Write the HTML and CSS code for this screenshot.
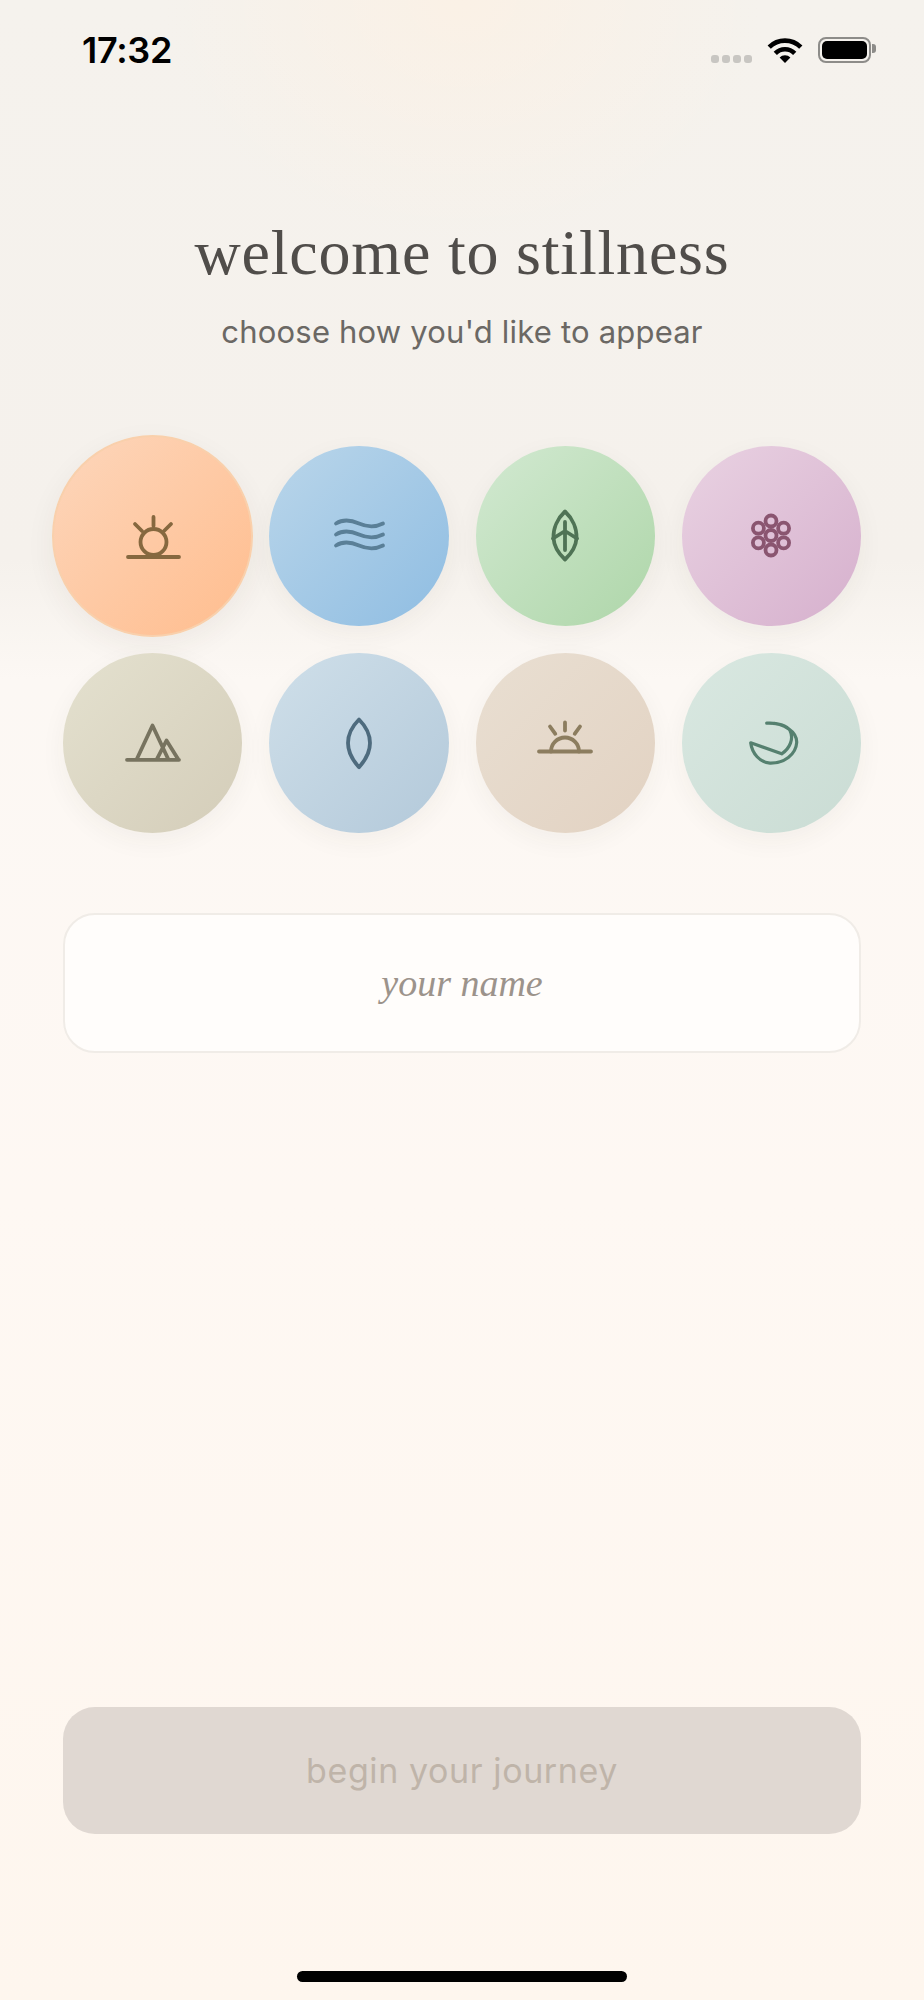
FILE: index.html
```html
<!DOCTYPE html>
<html lang="en">
<head>
  <meta charset="UTF-8">
  <meta name="viewport" content="width=device-width, initial-scale=1.0">
  <title>stillness - Welcome</title>
  <link rel="stylesheet" href="styles.css">
</head>
<body>
  <div class="status-bar">
    <span class="time">17:32</span>
    <div class="status-icons">
      <div class="signal"><i></i><i></i><i></i><i></i></div>
      <svg class="wifi" width="36" height="26" viewBox="0 0 36 26">
        <path d="M2.2 10.2A22.3 22.3 0 0 1 33.8 10.2" fill="none" stroke="#000" stroke-width="4.6"/>
        <path d="M8.3 16.3A13.7 13.7 0 0 1 27.7 16.3" fill="none" stroke="#000" stroke-width="4.6"/>
        <path d="M18 26L12.6 20.6A7.6 7.6 0 0 1 23.4 20.6Z"/>
      </svg>
      <div class="battery"><div class="battery-fill"></div></div>
    </div>
  </div>

  <div class="intro">
    <h1>welcome to stillness</h1>
    <p>choose how you'd like to appear</p>
  </div>

  <div class="avatar-grid">
    <button class="avatar peach selected">
      <svg viewBox="0 0 60 60" stroke="#86683f">
        <path d="M5 51H56M30.5 11V20M12 18L19 25M48 18L41 25"/>
        <circle cx="30.5" cy="36" r="13"/>
      </svg>
    </button>
    <button class="avatar blue">
      <svg viewBox="0 0 60 60" stroke="#5a7f97">
        <path d="M7 17.5C14 13 22 14 30 17.5S46 21.5 54 17.5"/>
        <path d="M7 28.5C14 24 22 25 30 28.5S46 32.5 54 28.5"/>
        <path d="M7 39.5C14 35 22 36 30 39.5S46 43.5 54 39.5"/>
      </svg>
    </button>
    <button class="avatar green">
      <svg viewBox="0 0 60 60" stroke="#4f7355">
        <path d="M30 5.5C37 12 42 22 41.5 32C41 41 36 48 30 53.5C24 48 19 41 18.5 32C18 22 23 12 30 5.5Z"/>
        <path d="M30 16V44M30 25L18 32.5M30 25L42 32.5"/>
      </svg>
    </button>
    <button class="avatar pink">
      <svg viewBox="0 0 60 60" stroke="#8a5570">
        <circle cx="30" cy="29.5" r="5.5"/>
        <circle cx="30" cy="15" r="5.5"/>
        <circle cx="30" cy="44" r="5.5"/>
        <circle cx="17.4" cy="22.2" r="5.5"/>
        <circle cx="42.6" cy="22.2" r="5.5"/>
        <circle cx="17.4" cy="36.8" r="5.5"/>
        <circle cx="42.6" cy="36.8" r="5.5"/>
      </svg>
    </button>
    <button class="avatar sand">
      <svg viewBox="0 0 60 60" stroke="#77735f">
        <path d="M4 46.8H56M13.5 46.8L29.5 12.5L45.5 46.8M33.5 46.8L43.5 27.5L55.5 46.8"/>
      </svg>
    </button>
    <button class="avatar steel">
      <svg viewBox="0 0 60 60" stroke="#4e6b7e">
        <path d="M30 6.5C36.5 13 41 22 41 30C41 39 36.5 47 30 54.2C23.500 47 19 39 19 30C19 22 23.500 13 30 6.5Z"/>
      </svg>
    </button>
    <button class="avatar tan">
      <svg viewBox="0 0 60 60" stroke="#8c7d5f">
        <path d="M4 38.500H56M30 9.500V17.500M15 13.500L20.300 20.800M45 13.500L39.700 20.800"/>
        <path d="M16 38.500A14 14 0 0 1 44 38.500"/>
      </svg>
    </button>
    <button class="avatar mint">
      <svg class="thin" viewBox="0 0 60 60" stroke="#55806f">
        <path d="M25.700 10.200C44 9.500 56 19.500 55.700 29.500C55 41.500 43 50.500 29 50.200C19 49.500 11 40.500 9.700 29.800L40.700 40.800C49 35.500 53 25.500 49 17.500C46 12.500 37 9.500 25.700 10.200Z"/>
      </svg>
    </button>
  </div>

  <input class="name-input" type="text" placeholder="your name">

  <button class="begin-button" disabled>begin your journey</button>

  <div class="home-bar"></div>
</body>
</html>
```

FILE: styles.css
```css
* {
  box-sizing: border-box;
}

html {
  height: 100%;
}

body {
  margin: 0;
  min-height: 2000px;
  padding: 0 63px;
  display: flex;
  flex-direction: column;
  font-family: Inter, "Noto Sans", sans-serif;
  background-color: #fef6ee;
  background-image:
    radial-gradient(ellipse 300px 240px at 50% 0, rgba(255, 240, 224, 0.55), rgba(255, 240, 224, 0)),
    linear-gradient(180deg, #f5f2ed 0, #f5f1ec 28%, #fcf8f4 34%, #fef8f3 60%, #fef6ee 100%);
}

.status-bar {
  display: flex;
  justify-content: space-between;
  align-items: flex-start;
  margin: 0 -16px 0 19px;
  padding-top: 37px;
  height: 63px;
}

.time {
  font-size: 36px;
  font-weight: 600;
  line-height: 26px;
  letter-spacing: -0.3px;
  color: #000;
}

.status-icons {
  display: flex;
  align-items: flex-end;
}

.signal {
  display: flex;
  gap: 3px;
  margin-right: 15px;
}

.signal i {
  width: 8px;
  height: 8px;
  border-radius: 3px;
  background-color: #c8c6c2;
}

.wifi {
  display: block;
  margin-right: 15px;
}

.battery {
  position: relative;
  width: 53px;
  height: 26px;
  padding: 2px;
  border: 2px solid #8d8c89;
  border-radius: 8px;
  margin-right: 6px;
}

/* the little nub on the right end */
.battery::after {
  content: "";
  position: absolute;
  left: 52px;
  top: 5px;
  width: 4px;
  height: 9px;
  border-radius: 0 3px 3px 0;
  background-color: #8d8c89;
}

.battery-fill {
  height: 100%;
  border-radius: 5px;
  background-color: #000;
}

.intro {
  text-align: center;
  margin-top: 155px;
}

.intro h1 {
  margin: 0;
  font-family: "Liberation Serif", serif;
  font-size: 64px;
  font-weight: 400;
  line-height: 70px;
  letter-spacing: 0.8px;
  color: #504d4a;
}

.intro p {
  margin: 24px 0 0;
  font-size: 31px;
  font-weight: 400;
  line-height: 40px;
  letter-spacing: 0.2px;
  color: #6b6864;
}

.avatar-grid {
  display: grid;
  grid-template-columns: repeat(4, 1fr);
  grid-auto-rows: 180px;
  gap: 27px;
  margin-top: 94px;
}

.avatar {
  display: flex;
  align-items: center;
  justify-content: center;
  padding: 0;
  border: none;
  border-radius: 50%;
  box-shadow: 0 8px 26px rgba(60, 50, 40, 0.05);
}

.avatar svg {
  width: 60px;
  height: 60px;
  flex: none;
  fill: none;
  stroke-width: 3.8;
  stroke-linecap: round;
  stroke-linejoin: round;
}

.avatar svg.thin {
  stroke-width: 3.2;
}

.avatar.selected {
  margin: -11px;
  border: 2px solid #f9d0ac;
  box-shadow: 0 10px 30px rgba(60, 50, 40, 0.06);
}

.peach { background: linear-gradient(135deg, #fdd6bb, #ffbd8e); }
.blue { background: linear-gradient(135deg, #bad6ea, #8fbde2); }
.green { background: linear-gradient(135deg, #d2e9d1, #aed6a9); }
.pink { background: linear-gradient(135deg, #e9d2e2, #d6b0cd); }
.sand { background: linear-gradient(135deg, #e4e1cf, #d4cdb9); }
.steel { background: linear-gradient(135deg, #cfdfe9, #b3c9da); }
.tan { background: linear-gradient(135deg, #e9dfd2, #e2d2c2); }
.mint { background: linear-gradient(135deg, #d9e8e1, #cadcd4); }

.name-input {
  display: block;
  width: 100%;
  height: 140px;
  margin-top: 80px;
  border: 2px solid #f0ece7;
  border-radius: 32px;
  background-color: #fffdfb;
  text-align: center;
  font-family: "Liberation Serif", serif;
  font-size: 38px;
  font-style: italic;
  color: #55504b;
  outline: none;
}

.name-input::placeholder {
  color: #9c938b;
  opacity: 1;
}

.begin-button {
  display: block;
  width: 100%;
  height: 127px;
  margin-top: auto;
  border: none;
  border-radius: 32px;
  background-color: #e0d8d2;
  font-family: Inter, "Noto Sans", sans-serif;
  font-size: 34px;
  font-weight: 400;
  letter-spacing: 0.6px;
  color: #bfb4a9;
}

.home-bar {
  width: 330px;
  height: 11px;
  margin: 137px auto 18px;
  border-radius: 6px;
  background-color: #000;
}
```
